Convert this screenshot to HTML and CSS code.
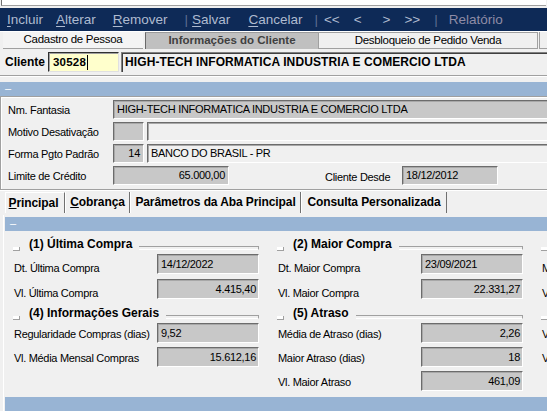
FILE: index.html
```html
<!DOCTYPE html>
<html lang="pt-BR">
<head>
<meta charset="utf-8">
<title>Informações do Cliente</title>
<link rel="stylesheet" href="styles.css">
</head>
<body>
<div class="app">
  <div class="topstrip"><div class="topfield"></div></div>

  <div class="toolbar">
    <span class="tb"><u>I</u>ncluir</span>
    <span class="tb g14"><u>A</u>lterar</span>
    <span class="tb g18"><u>R</u>emover</span>
    <span class="sep g18">|</span>
    <span class="tb g4"><u>S</u>alvar</span>
    <span class="tb g19"><u>C</u>ancelar</span>
    <span class="sep g13">|</span>
    <span class="tb g6">&lt;&lt;</span>
    <span class="tb g15">&lt;</span>
    <span class="tb g22">&gt;</span>
    <span class="tb g15">&gt;&gt;</span>
    <span class="sep g15">|</span>
    <span class="tb dim g12">Relatório</span>
  </div>

  <div class="tabs1">
    <div class="t1">Cadastro de Pessoa</div>
    <div class="t2">Informações do Cliente</div>
    <div class="t3">Desbloqueio de Pedido Venda</div>
    <div class="t4"></div>
  </div>

  <div class="clirow">
    <span class="clilabel">Cliente</span>
    <div class="cliinput">30528<span class="caret"></span></div>
    <div class="cliname">HIGH-TECH INFORMATICA INDUSTRIA E COMERCIO LTDA</div>
  </div>
  <div class="sepline"></div>

  <div class="bluebar first"><span class="dash">–</span></div>

  <div class="panel">
    <div class="prow">
      <span class="plabel">Nm. Fantasia</span>
      <div class="fg grow1">HIGH-TECH INFORMATICA INDUSTRIA E COMERCIO LTDA</div>
    </div>
    <div class="prow">
      <span class="plabel">Motivo Desativação</span>
      <div class="fg small"></div>
      <div class="fl grow1"></div>
    </div>
    <div class="prow">
      <span class="plabel">Forma Pgto Padrão</span>
      <div class="fg small right">14</div>
      <div class="fl grow1">BANCO DO BRASIL - PR</div>
    </div>
    <div class="prow">
      <span class="plabel">Limite de Crédito</span>
      <div class="fg limit right">65.000,00</div>
      <span class="desde">Cliente Desde</span>
      <div class="fg date">18/12/2012</div>
    </div>
  </div>

  <div class="tabs2">
    <div class="tab sel"><u>P</u>rincipal</div>
    <div class="tab cob"><u>C</u>obrança</div>
    <div class="tab par">Parâmetros da Aba Principal</div>
    <div class="tab con">Consulta Personalizada</div>
  </div>

  <div class="tabbody">
    <div class="bluebar"><span class="dash">–</span></div>

    <div class="groups">
      <div class="group">
        <div class="ghead"><span class="tog"></span><span class="gtitle">(1) Última Compra</span><span class="gline"></span></div>
        <div class="grows low">
          <div class="grow"><span class="glabel">Dt. Última Compra</span><div class="fg gf">14/12/2022</div></div>
          <div class="grow"><span class="glabel">Vl. Última Compra</span><div class="fg gf right">4.415,40</div></div>
        </div>
      </div>
      <div class="group">
        <div class="ghead"><span class="tog"></span><span class="gtitle">(2) Maior Compra</span><span class="gline"></span></div>
        <div class="grows low">
          <div class="grow"><span class="glabel">Dt. Maior Compra</span><div class="fg gf">23/09/2021</div></div>
          <div class="grow"><span class="glabel">Vl. Maior Compra</span><div class="fg gf right">22.331,27</div></div>
        </div>
      </div>
      <div class="group">
        <div class="ghead"><span class="tog"></span><span class="gtitle">(3)</span></div>
        <div class="grows low">
          <div class="grow"><span class="glabel">M</span></div>
          <div class="grow"><span class="glabel">V</span></div>
        </div>
      </div>

      <div class="group">
        <div class="ghead"><span class="tog"></span><span class="gtitle">(4) Informações Gerais</span><span class="gline"></span></div>
        <div class="grows tight">
          <div class="grow"><span class="glabel">Regularidade Compras (dias)</span><div class="fg gf">9,52</div></div>
          <div class="grow"><span class="glabel">Vl. Média Mensal Compras</span><div class="fg gf right">15.612,16</div></div>
        </div>
      </div>
      <div class="group">
        <div class="ghead"><span class="tog"></span><span class="gtitle">(5) Atraso</span><span class="gline"></span></div>
        <div class="grows tight">
          <div class="grow"><span class="glabel">Média de Atraso (dias)</span><div class="fg gf right">2,26</div></div>
          <div class="grow"><span class="glabel">Maior Atraso (dias)</span><div class="fg gf right">18</div></div>
          <div class="grow"><span class="glabel">Vl. Maior Atraso</span><div class="fg gf right">461,09</div></div>
        </div>
      </div>
      <div class="group">
        <div class="ghead"><span class="tog"></span><span class="gtitle">(6)</span></div>
        <div class="grows tight">
          <div class="grow"><span class="glabel">Vl</span></div>
          <div class="grow"><span class="glabel">Vl</span></div>
        </div>
      </div>
    </div>

    <div class="bluebar bottom"></div>
  </div>
</div>
</body>
</html>
```

FILE: styles.css
```css
* { box-sizing: border-box; }
html, body { margin: 0; padding: 0; }
body {
  width: 547px;
  height: 411px;
  overflow: hidden;
  background: #f0f0f0;
  font-family: "Liberation Sans", Arial, sans-serif;
  font-size: 11px;
  color: #000;
}
.app { width: 570px; letter-spacing: -0.3px; }

/* top strip (cut-off field of the window above) */
.topstrip { height: 8px; background: #f0f0f0; }
.topfield {
  height: 6px;
  width: 545px;
  margin-left: 1px;
  background: #fff;
  border-left: 1px solid #707070;
  border-bottom: 1px solid #a0a0a0;
}

/* toolbar */
.toolbar {
  height: 23px;
  background: #0e2a57;
  display: flex;
  align-items: center;
  padding: 0 0 1px 7px;
  font-size: 13.5px;
  letter-spacing: 0;
  color: #aebbd0;
  white-space: nowrap;
}
.toolbar u { text-underline-offset: 2px; }
.sep { color: #5d6f92; }
.dim { color: #8f8ca6; }
.g4 { margin-left: 4px; }
.g6 { margin-left: 6px; }
.g12 { margin-left: 11px; }
.g13 { margin-left: 12px; }
.g14 { margin-left: 13px; }
.g15 { margin-left: 14px; }
.g18 { margin-left: 17px; }
.g19 { margin-left: 18px; }
.g22 { margin-left: 21px; }

/* first tab row */
.tabs1 {
  height: 18px;
  display: flex;
  padding-left: 3px;
  border-top: 1px solid #fff;
  font-size: 11.5px;
}
.tabs1 > div { line-height: 15px; text-align: center; white-space: nowrap; flex: none; }
.t1 {
  width: 140px;
  background: #f4f4f4;
  border-bottom: 1px solid #a0a0a0;
}
.t2 {
  width: 173px;
  margin-left: 2px;
  background: #c0c0c0;
  color: #404040;
  font-weight: bold;
  letter-spacing: 0;
  border-left: 1px solid #6a6a6a;
  border-top: 1px solid #9a9a9a;
}
.t3 {
  width: 220px;
  border: 1px solid #a0a0a0;
  background: #f0f0f0;
}
.t4 { width: 40px; border-left: 1px solid #a0a0a0; border-bottom: 1px solid #a0a0a0; margin-left: 1px; }

/* cliente row */
.clirow {
  height: 27px;
  display: flex;
  align-items: flex-start;
  padding: 3px 0 0 5px;
  border-bottom: 1px solid #a0a0a0;
}
.clilabel {
  width: 43px;
  font-weight: bold;
  font-size: 12px;
  letter-spacing: 0;
  line-height: 20px;
}
.cliinput {
  width: 71px;
  height: 20px;
  background: #ffffcc;
  border-top: 1px solid #303030;
  border-left: 1px solid #303030;
  border-right: 1px solid #e0e0e0;
  border-bottom: 1px solid #e0e0e0;
  box-shadow: inset 1px 1px 0 #a0a0a0;
  padding-left: 4px;
  font-weight: bold;
  font-size: 11.5px;
  letter-spacing: 0.2px;
  line-height: 18px;
  display: flex;
  align-items: center;
}
.caret { width: 1px; height: 15px; background: #000; margin-left: 1px; }
.cliname {
  flex: 1;
  height: 20px;
  margin-left: 2px;
  border-top: 1px solid #808080;
  border-left: 1px solid #808080;
  box-shadow: inset 1px 1px 0 #404040;
  padding-left: 3px;
  font-weight: bold;
  font-size: 12px;
  letter-spacing: 0.1px;
  line-height: 19px;
  white-space: nowrap;
}
.sepline { height: 6px; border-top: 1px solid #fff; }

/* blue header bars */
.bluebar {
  height: 14px;
  background: #98b4d4;
  color: #fff;
  padding-left: 5px;
  line-height: 12px;
  font-size: 11px;
}
.bluebar.bottom { margin-top: 6px; }

/* client panel */
.panel {
  height: 94px;
  border-top: 1px solid #a0a0a0;
  border-left: 1px solid #a0a0a0;
  border-bottom: 1px solid #a0a0a0;
  box-shadow: inset 1px 1px 0 #fff, 0 1px 0 #fff;
  padding: 3px 0 0 7px;
  display: flex;
  flex-direction: column;
  gap: 3px;
}
.prow { display: flex; align-items: center; height: 19px; }
.plabel { width: 105px; white-space: nowrap; padding-top: 1px; }

.fg, .fl {
  height: 19px;
  border-style: solid;
  border-width: 1px;
  border-color: #6c6c6c #fff #fff #6c6c6c;
  box-shadow: inset 1px 1px 0 #a8a8a8;
  padding: 0 3px;
  line-height: 17px;
  white-space: nowrap;
  overflow: hidden;
  flex: none;
}
.fg { background: #c8c8c8; }
.fl { background: #f0f0f0; }
.right { text-align: right; }
.grow1 { flex: 1; }
.small { width: 31px; margin-right: 3px; }
.limit { width: 116px; }
.desde { margin-left: 96px; width: 77px; padding-top: 2px; }
.date { width: 96px; }

/* second tab row */
.tabs2 {
  display: flex;
  height: 25px;
  padding: 2px 0 0 5px;
  font-weight: bold;
  font-size: 12px;
  letter-spacing: -0.1px;
  white-space: nowrap;
}
.tab {
  height: 21px;
  line-height: 21px;
  text-align: center;
  border-left: 1px solid #fff;
  border-right: 1px solid #707070;
  flex: none;
}
.tab u { text-underline-offset: 1px; }
.sel { width: 60px; padding-right: 3px; border-top: 1px solid #fff; }
.cob { width: 65px; }
.par { width: 171px; }
.con { width: 146px; }

/* tab body */
.tabbody {
  margin-left: 3px;
  padding-top: 2px;
  border-left: 1px solid #fff;
  padding-left: 1px;
}

.groups {
  display: grid;
  grid-template-columns: 246px 246px 60px;
  column-gap: 18px;
  row-gap: 7px;
  padding: 6px 0 0 8px;
}
.group { display: flex; flex-direction: column; }
.ghead { display: flex; align-items: flex-start; height: 14px; margin-bottom: 3px; white-space: nowrap; }
.tog {
  width: 7px;
  height: 4px;
  margin-top: 10px;
  background: #fff;
  border-right: 1px solid #a0a0a0;
  border-bottom: 1px solid #a0a0a0;
  flex: none;
}
.gtitle {
  margin-left: 9px;
  font-weight: bold;
  font-size: 12px;
  letter-spacing: 0;
  line-height: 15px;
}
.gline {
  flex: 1;
  height: 4px;
  margin: 9px 0 0 7px;
  border-top: 1px solid #a0a0a0;
  border-right: 1px solid #a0a0a0;
  border-bottom: 1px solid #fff;
}
.grows { display: flex; flex-direction: column; gap: 5px; }
.grows.tight { gap: 4px; }
.grow { display: flex; align-items: center; height: 20px; padding-left: 1px; }
.glabel { width: 143px; white-space: nowrap; flex: none; padding-top: 1px; }
.grows.low .glabel { padding-top: 8px; }
.gf { width: 102px; height: 20px; line-height: 18px; padding: 0 2px 0 3px; }
```
